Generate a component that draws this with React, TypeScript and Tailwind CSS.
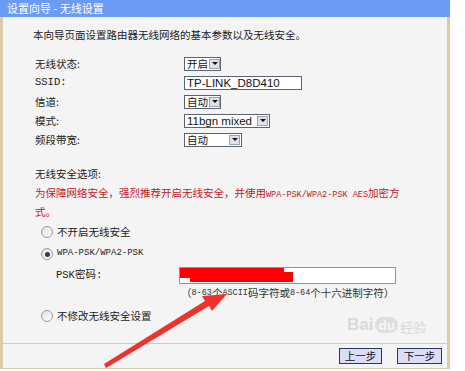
import React from "react";

const cjk = { fontFamily: '"Noto Sans CJK SC", "Noto Sans", sans-serif' };
const song = { fontFamily: '"Liberation Mono", "Noto Sans CJK SC", monospace' };
const arial = { fontFamily: '"Liberation Sans", Arial, sans-serif' };

function Arrow() {
  return (
    <div className="m-[1px] flex w-[11px] shrink-0 items-center justify-center border border-[#9aa3b0] bg-[#dde2ea]">
      <div className="h-0 w-0 border-l-[3px] border-r-[3px] border-t-[3px] border-l-transparent border-r-transparent border-t-[#111]" />
    </div>
  );
}

function Select({ value, width, latin }: { value: string; width: string; latin?: boolean }) {
  return (
    <div className={`flex h-[14px] shrink-0 items-stretch overflow-hidden border border-[#5a6470] bg-white ${width}`}>
      <div
        className={`flex-1 whitespace-nowrap pl-[2px] leading-[12px] text-[#111] ${latin ? "text-[11.5px]" : "text-[10.5px]"}`}
        style={latin ? arial : cjk}
      >
        {value}
      </div>
      <Arrow />
    </div>
  );
}

function Radio({ checked }: { checked?: boolean }) {
  return (
    <div className="flex h-[12px] w-[12px] items-center justify-center rounded-full border border-[#9a9a9a] bg-gradient-to-br from-[#e2e2e2] to-[#ffffff]">
      {checked && <div className="h-[5px] w-[5px] rounded-full bg-[#2b3a55]" />}
    </div>
  );
}

function Row({ label, children, mono }: { label: string; children: React.ReactNode; mono?: boolean }) {
  return (
    <div className="flex h-[19px] items-center">
      <div className="w-[149px] shrink-0 text-[10.5px] text-[#222]" style={mono ? song : cjk}>
        {label}
      </div>
      {children}
    </div>
  );
}

export default function App() {
  return (
    <div className="relative h-[371px] w-[465px] overflow-hidden bg-white">
      <div className="w-[450px]">
        <div className="flex h-[17px] items-center bg-[#6b9bf5] pl-[7px] text-[11px] text-white" style={cjk}>
          设置向导 - 无线设置
        </div>
        <div className="h-[326px] border-l-[3px] border-r-[3px] border-[#dccbab] bg-[#f4f4f4] pl-[30px] pt-[10px]">
          <div className="h-[16px] text-[10.5px] leading-[16px] text-[#222]" style={cjk}>
            本向导页面设置路由器无线网络的基本参数以及无线安全。
          </div>
          <div className="ml-[2px] mt-[11px]">
            <Row label="无线状态:">
              <Select value="开启" width="w-[37px]" />
            </Row>
            <Row label="SSID:" mono>
              <div
                className="flex h-[14px] w-[118px] items-center overflow-hidden whitespace-nowrap border border-[#5a6470] bg-white pl-[2px] text-[11.5px] leading-[12px] text-[#111]"
                style={arial}
              >
                TP-LINK_D8D410
              </div>
            </Row>
            <Row label="信道:">
              <Select value="自动" width="w-[37px]" />
            </Row>
            <Row label="模式:">
              <Select value="11bgn mixed" width="w-[86px]" latin />
            </Row>
            <Row label="频段带宽:">
              <Select value="自动" width="w-[58px]" />
            </Row>
          </div>

          <div className="ml-[2px] mt-[16px] h-[18px] text-[10.5px] leading-[18px] text-[#222]" style={cjk}>
            无线安全选项:
          </div>
          <div className="ml-[2px] h-[38px] text-[10.5px] leading-[19px] text-[#c4161c]" style={cjk}>
            <div className="h-[19px] whitespace-nowrap">
              为保障网络安全，强烈推荐开启无线安全，并使用
              <span className="text-[8.5px] leading-none" style={song}>
                WPA-PSK/WPA2-PSK AES
              </span>
              加密方
            </div>
            <div className="h-[19px]">式。</div>
          </div>

          <div className="flex h-[22px] items-center pl-[8px]">
            <Radio />
            <span className="ml-[4px] text-[10.5px] text-[#222]" style={cjk}>
              不开启无线安全
            </span>
          </div>
          <div className="flex h-[22px] items-center pl-[8px]">
            <Radio checked />
            <span className="ml-[4px] text-[9px] text-[#222]" style={song}>
              WPA-PSK/WPA2-PSK
            </span>
          </div>
          <div className="flex h-[21px] items-center pl-[23px]">
            <div className="w-[123px] shrink-0 text-[10.5px] text-[#222]" style={song}>
              PSK密码:
            </div>
            <div className="relative h-[17px] w-[217px] border border-[#8a96a4] bg-white">
              <div className="absolute left-0 top-0 h-[10px] w-[104px] bg-[#ff0000]" />
              <div className="absolute left-[10px] top-[4px] h-[10px] w-[103px] bg-[#ff0000]" />
            </div>
          </div>
          <div className="flex h-[18px] items-center whitespace-nowrap pb-[4px] pl-[148px] text-[10.5px] text-[#333]" style={cjk}>
            <span>（</span>
            <span className="text-[8.5px]" style={song}>8-63</span>
            <span>个</span>
            <span className="text-[8.5px]" style={song}>ASCII</span>
            <span>码字符或</span>
            <span className="text-[8.5px]" style={song}>8-64</span>
            <span>个十六进制字符）</span>
          </div>
          <div className="flex h-[24px] items-center pl-[8px]">
            <Radio />
            <span className="ml-[4px] text-[10.5px] text-[#222]" style={cjk}>
              不修改无线安全设置
            </span>
          </div>
        </div>
        <div className="flex h-[26px] items-center justify-end gap-[15px] border-x-[3px] border-y border-[#dccbab] bg-[#f4f4f4] pr-[5px]">
          <div className="flex h-[16px] w-[43px] items-center justify-center border border-[#2d3560] bg-[#dcdcf6] text-[10.5px] text-[#111]" style={cjk}>
            上一步
          </div>
          <div className="flex h-[16px] w-[45px] items-center justify-center border border-[#2d3560] bg-[#dcdcf6] text-[10.5px] text-[#111]" style={cjk}>
            下一步
          </div>
        </div>
      </div>

      {/* watermark */}
      <div className="pointer-events-none absolute left-[347px] top-[316px] flex items-end gap-[2px] text-[#dadada]">
        <span className="text-[17px] font-bold leading-none" style={arial}>
          Bai
        </span>
        <span className="rounded-full bg-[#dedede] px-[3px] text-[13px] font-bold leading-[16px] text-[#f4f4f4]">du</span>
        <span className="text-[13px] leading-none" style={cjk}>
          经验
        </span>
      </div>

      {/* red arrow annotation */}
      <svg className="pointer-events-none absolute left-0 top-0" width="465" height="371" viewBox="0 0 465 371">
        <polygon points="104,364 205,301 202,296 227,294 212,311 209,306 106,368" fill="#f0322c" />
      </svg>
    </div>
  );
}
